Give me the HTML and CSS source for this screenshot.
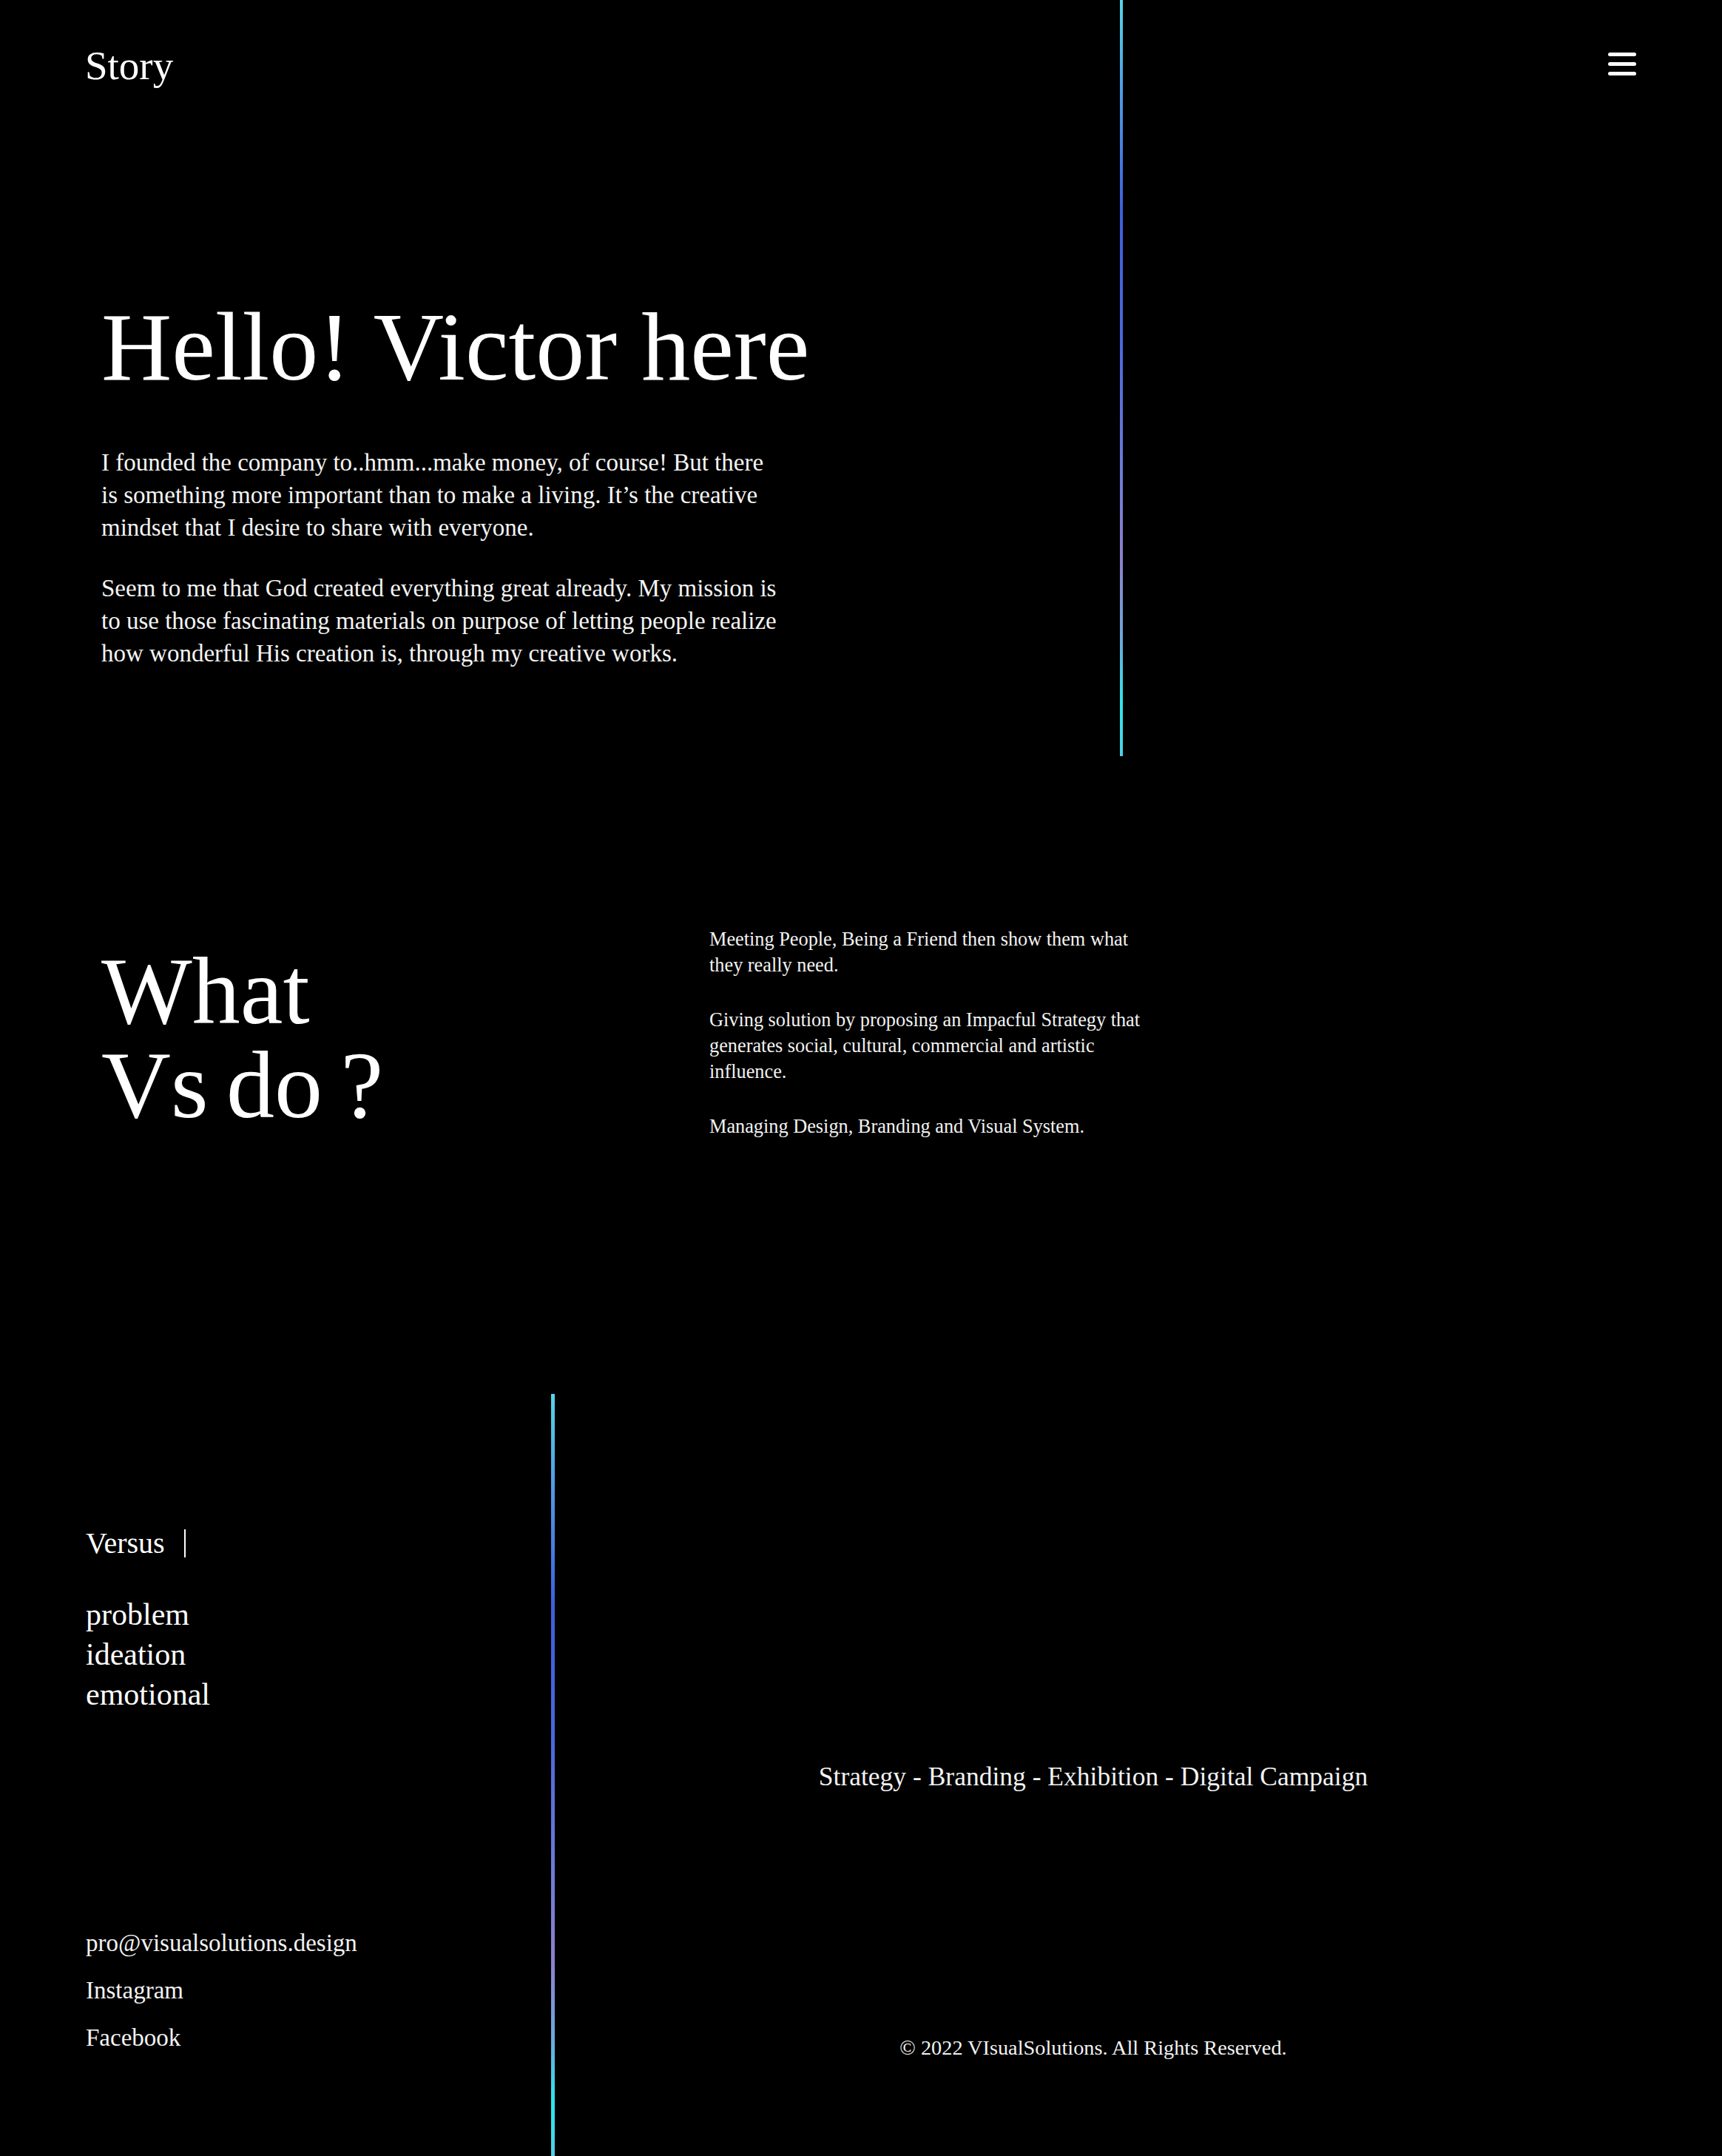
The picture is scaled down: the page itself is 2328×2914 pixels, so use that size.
FILE: index.html
```html
<!DOCTYPE html>
<html lang="en">
<head>
<meta charset="utf-8">
<title>Story — VIsualSolutions</title>
<link rel="stylesheet" href="styles.css">
</head>
<body>
<div class="intro">
  <div class="intro-main">
    <a class="logo" href="#">Story</a>
    <section class="hero">
      <h1 class="hero-title">Hello! Victor here</h1>
      <p class="hero-text">I founded the company to..hmm...make money, of course! But there<br>is something more important than to make a living. It’s the creative<br>mindset that I desire to share with everyone.</p>
      <p class="hero-text">Seem to me that God created everything great already. My mission is<br>to use those fascinating materials on purpose of letting people realize<br>how wonderful His creation is, through my creative works.</p>
    </section>
  </div>
  <div class="intro-side">
    <button class="menu" aria-label="Menu"><span></span><span></span><span></span></button>
  </div>
</div>

<section class="services">
  <h2 class="services-title"><span class="title-line">What</span><span class="title-line">Vs do ?</span></h2>
  <div class="services-list">
    <p>Meeting People, Being a Friend then show them what<br>they really need.</p>
    <p>Giving solution by proposing an Impacful Strategy that<br>generates social, cultural, commercial and artistic<br>influence.</p>
    <p>Managing Design, Branding and Visual System.</p>
  </div>
</section>

<footer class="footer">
  <div class="footer-left">
    <div class="versus"><span>Versus</span><span class="cursor"></span></div>
    <ul class="words">
      <li>problem</li>
      <li>ideation</li>
      <li>emotional</li>
    </ul>
    <div class="contacts">
      <a href="#">pro@visualsolutions.design</a>
      <a href="#">Instagram</a>
      <a href="#">Facebook</a>
    </div>
  </div>
  <div class="footer-right">
    <p class="tagline">Strategy - Branding - Exhibition - Digital Campaign</p>
    <p class="copyright">© 2022 VIsualSolutions. All Rights Reserved.</p>
  </div>
</footer>
</body>
</html>
```

FILE: styles.css
```css
html, body {
  margin: 0;
  padding: 0;
  background: #000;
  color: #fff;
  font-family: "Liberation Serif", "Times New Roman", serif;
}

a {
  color: inherit;
  text-decoration: none;
}

p, h1, h2, ul {
  margin: 0;
  padding: 0;
  font-weight: 400;
}

/* ---------- intro ---------- */
.intro {
  display: grid;
  grid-template-columns: 1514px 1fr;
  height: 1022px;
}

.intro-main {
  padding-left: 115px;
}

.logo {
  display: block;
  margin-top: 59px;
  font-size: 55px;
  line-height: 60px;
}

.hero {
  padding-left: 22px;
}

.hero-title {
  margin-top: 284px;
  font-size: 132px;
  line-height: 132px;
}

.hero-text {
  font-size: 33px;
  line-height: 44px;
  color: #f4f4f4;
  margin-top: 38px;
}

.hero-title + .hero-text {
  margin-top: 68px;
}

.intro-side {
  border-left: 4px solid #4f9de6;
  border-image: linear-gradient(to bottom, #55d6e6 0%, #4f9de6 12%, #3d5fdc 28%, #4a68dc 45%, #6b7bd8 62%, #8c80cf 74%, #6ea6dc 84%, #2fe4ee 93%, #4fd0e4 100%) 1;
  display: flex;
  justify-content: flex-end;
  align-items: flex-start;
  padding: 71px 116px 0 0;
}

.menu {
  display: flex;
  flex-direction: column;
  gap: 8px;
  background: none;
  border: 0;
  padding: 0;
  cursor: pointer;
}

.menu span {
  display: block;
  width: 38px;
  height: 5px;
  border-radius: 3px;
  background: #fff;
}

/* ---------- services ---------- */
.services {
  display: grid;
  grid-template-columns: 822px 1fr;
  align-items: start;
  padding: 230px 0 344px 137px;
}

.services-title {
  margin-top: 24px;
  font-size: 130px;
  line-height: 127px;
  word-spacing: -8px;
}

.title-line {
  display: block;
}

.services-list p {
  font-size: 26.3px;
  line-height: 35px;
  color: #f2f2f2;
  margin-bottom: 39px;
}

.services-list p:last-child {
  margin-bottom: 0;
}

/* ---------- footer ---------- */
.footer {
  display: grid;
  grid-template-columns: 745px 1fr;
}

.footer-left {
  padding: 179px 0 128px 116px;
}

.versus {
  display: flex;
  align-items: center;
  font-size: 40px;
  line-height: 46px;
}

.cursor {
  width: 2px;
  height: 38px;
  margin-left: 26px;
  background: #fff;
}

.words {
  list-style: none;
  margin-top: 46px;
  font-size: 42px;
  line-height: 54px;
}

.contacts {
  margin-top: 277px;
  display: flex;
  flex-direction: column;
  font-size: 33px;
  line-height: 64px;
  color: #f2f2f2;
}

.footer-right {
  border-left: 5px solid #4f9de6;
  border-image: linear-gradient(to bottom, #55d6e6 0%, #4f9de6 12%, #3d5fdc 28%, #4a68dc 45%, #6b7bd8 62%, #8c80cf 74%, #6ea6dc 84%, #2fe4ee 93%, #4fd0e4 100%) 1;
  padding: 494px 122px 128px 0;
  text-align: center;
}

.tagline {
  font-size: 35.5px;
  line-height: 46px;
  color: #f2f2f2;
}

.copyright {
  margin-top: 326px;
  font-size: 28.3px;
  line-height: 36px;
  color: #f2f2f2;
}
```
